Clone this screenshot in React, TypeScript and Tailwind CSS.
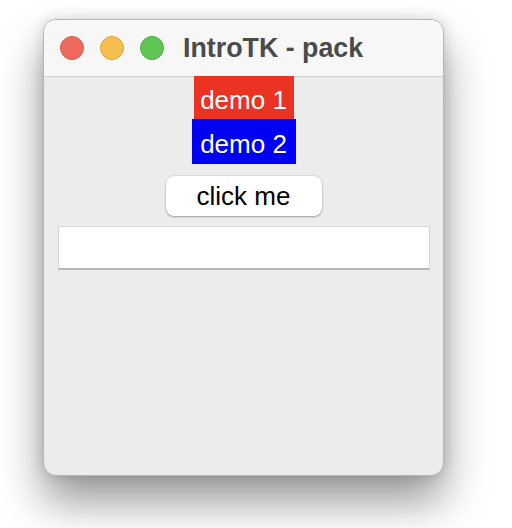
export default function App() {
  return (
    <div className="w-[512px] h-[528px] bg-white overflow-hidden pt-[19px] pl-[43px]" style={{ fontFamily: '"Liberation Sans", Arial, sans-serif' }}>
      <div className="w-[401px] h-[457px] rounded-[13px] bg-[#ececec] border border-[#b5b5b5] overflow-hidden flex flex-col shadow-[0_26px_44px_rgba(0,0,0,0.4),0_0_14px_rgba(0,0,0,0.14)]">
        <div className="h-[57px] shrink-0 bg-[#f6f7f6] border-b border-[#d2d2d2] flex items-center pl-[16px]">
          <div className="w-[24px] h-[24px] rounded-full bg-[#ee6a5f] border border-[#d9594f]" />
          <div className="w-[24px] h-[24px] rounded-full bg-[#f5be4f] border border-[#dea63d] ml-[16px]" />
          <div className="w-[24px] h-[24px] rounded-full bg-[#61c554] border border-[#50ad44] ml-[16px]" />
          <div className="ml-[19px] text-[26.8px] font-bold text-[#4b4b4b]">IntroTK - pack</div>
        </div>
        <div className="flex flex-col items-center">
          <div className="w-[100px] h-[43px] bg-[#ea3323] text-white text-[26px] flex items-center justify-center -mt-[1px] pt-[6px]">demo 1</div>
          <div className="w-[104px] h-[45px] bg-[#0000f5] text-white text-[26px] flex items-center justify-center pt-[6px]">demo 2</div>
          <div className="mt-[12px] w-[156px] h-[40px] bg-white rounded-[8px] text-black text-[26px] flex items-center justify-center shadow-[0_1px_2px_rgba(0,0,0,0.3),0_0_0_0.5px_rgba(0,0,0,0.12)]">click me</div>
          <div className="mt-[10px] w-[372px] h-[44px] bg-white border border-[#d8d8d8] border-b-[2px] border-b-[#b8b8b8]" />
        </div>
      </div>
    </div>
  );
}
